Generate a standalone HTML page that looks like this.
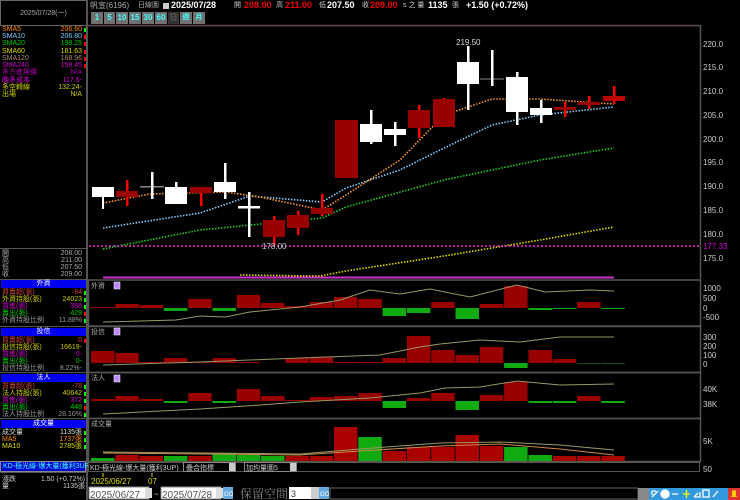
<!DOCTYPE html>
<html><head><meta charset="utf-8">
<style>
*{margin:0;padding:0;box-sizing:border-box}
body{width:740px;height:500px;background:#000;overflow:hidden;position:relative;font-family:"Liberation Sans","Noto Sans CJK TC",sans-serif;font-size:7px;color:#ccc}
.a{position:absolute;white-space:nowrap;line-height:8px}
.r{position:absolute;left:2px;width:84px;height:8px;line-height:8px;font-size:7px}
.r span{position:absolute;right:4px}
.r i{position:absolute;right:0;top:2px;width:2px;height:4px}
.hd{position:absolute;left:1px;width:85px;height:8px;background:#0000ee;color:#fff;text-align:center;font-size:7px;line-height:8px}
.btn{position:absolute;top:12px;height:12px;background:#707070;color:#4ff;font-size:8px;line-height:12px;text-align:center;font-weight:bold}
</style></head><body>
<div class="a" style="left:0;top:0;width:88px;height:26px;border:1px solid #666;border-right:2px solid #666;color:#aaa;text-align:center;line-height:25px;font-size:7px">2025/07/28(一)</div>
<div class="a" style="left:86px;top:0;width:2px;height:500px;background:#555"></div>
<div class="r" style="top:26px;color:#f80">SMA5<span>206.60</span><i style="background:#0f0"></i></div>
<div class="r" style="top:33px;color:#7cf">SMA10<span>206.80</span><i style="background:#f00"></i></div>
<div class="r" style="top:40px;color:#0c0">SMA20<span>198.25</span><i style="background:#f00"></i></div>
<div class="r" style="top:48px;color:#dd0">SMA60<span>181.63</span><i style="background:#f00"></i></div>
<div class="r" style="top:55px;color:#a87">SMA120<span>168.96</span><i style="background:#f00"></i></div>
<div class="r" style="top:62px;color:#c0c">SMA240<span>159.45</span><i style="background:#f00"></i></div>
<div class="r" style="top:69px;color:#a0a">多方進場價<span>N/A</span></div>
<div class="r" style="top:77px;color:#d0d">晚多成本<span>117.5-</span></div>
<div class="r" style="top:84px;color:#cc0">多空轉線<span>132.24-</span></div>
<div class="r" style="top:91px;color:#cc0">出場<span>N/A</span></div>
<div class="a" style="left:0;top:248px;width:86px;height:1px;background:#555"></div>
<div class="r" style="top:250px;color:#aaa">開<span>208.00</span></div>
<div class="r" style="top:257px;color:#aaa">高<span>211.00</span></div>
<div class="r" style="top:264px;color:#aaa">低<span>207.50</span></div>
<div class="r" style="top:271px;color:#aaa">收<span>209.00</span></div>
<div class="a" style="left:0;top:279px;width:86px;height:1px;background:#555"></div>
<div class="hd" style="top:280px">外資</div>
<div class="r" style="top:289px;color:#c44">買賣超(張)<span>-84</span><i style="background:#0f0"></i></div>
<div class="r" style="top:296px;color:#cc0">外資持股(張)<span>24023</span><i style="background:#0f0"></i></div>
<div class="r" style="top:303px;color:#c0c">買進(張)<span>358</span><i style="background:#0f0"></i></div>
<div class="r" style="top:310px;color:#0c0">賣出(張)<span>429</span><i style="background:#f00"></i></div>
<div class="r" style="top:317px;color:#999">外資持股比例<span>11.88%</span><i style="background:#0f0"></i></div>
<div class="a" style="left:0;top:326px;width:86px;height:1px;background:#555"></div>
<div class="hd" style="top:328px">投信</div>
<div class="r" style="top:337px;color:#c44">買賣超(張)<span>0</span><i style="background:#f00"></i></div>
<div class="r" style="top:344px;color:#cc0">投信持股(張)<span>16619-</span></div>
<div class="r" style="top:351px;color:#c0c">買進(張)<span>0-</span></div>
<div class="r" style="top:358px;color:#0c0">賣出(張)<span>0-</span></div>
<div class="r" style="top:365px;color:#999">投信持股比例<span>8.22%-</span></div>
<div class="a" style="left:0;top:372px;width:86px;height:1px;background:#555"></div>
<div class="hd" style="top:374px">法人</div>
<div class="r" style="top:383px;color:#c44">買賣超(張)<span>-78</span><i style="background:#0f0"></i></div>
<div class="r" style="top:390px;color:#cc0">法人持股(張)<span>40642</span><i style="background:#0f0"></i></div>
<div class="r" style="top:397px;color:#c0c">買進(張)<span>372</span><i style="background:#0f0"></i></div>
<div class="r" style="top:404px;color:#0c0">賣出(張)<span>448</span><i style="background:#f00"></i></div>
<div class="r" style="top:411px;color:#999">法人持股比例<span>28.10%</span><i style="background:#0f0"></i></div>
<div class="a" style="left:0;top:418px;width:86px;height:1px;background:#555"></div>
<div class="hd" style="top:420px">成交量</div>
<div class="r" style="top:429px;color:#ddd">成交量<span>1135張</span><i style="background:#0f0"></i></div>
<div class="r" style="top:436px;color:#f80">MA5<span>1737張</span><i style="background:#0f0"></i></div>
<div class="r" style="top:443px;color:#dd0">MA10<span>2785張</span><i style="background:#0f0"></i></div>
<div class="a" style="left:0;top:461px;width:86px;height:11px;background:#0000cc;border:1px solid #888;color:#4ff;line-height:9px;padding-left:2px">KD-極光線-爆大量(獲利3UP)</div>
<div class="a" style="left:0;top:472px;width:86px;height:1px;background:#555"></div>
<div class="r" style="top:476px;color:#ccc">漲跌<span style="right:1px">1.50 (+0.72%)</span></div>
<div class="r" style="top:483px;color:#ccc">量<span style="right:1px">1135張</span></div>

<div class="a" style="left:90px;top:2px;font-size:8px;color:#aaa">帆宣(6196)</div>
<div class="a" style="left:138px;top:2px;font-size:7px;color:#aaa">日線圖</div>
<div class="a" style="left:163px;top:3px;width:6px;height:6px;background:#ccc"></div>
<div class="a" style="left:171px;top:1px;font-size:9px;color:#fff;font-weight:bold">2025/07/28</div>
<div class="a" style="left:234px;top:2px;font-size:7px;color:#ccc">開</div>
<div class="a" style="left:244px;top:1px;font-size:9px;color:#e00;font-weight:bold">208.00</div>
<div class="a" style="left:276px;top:2px;font-size:7px;color:#ccc">高</div>
<div class="a" style="left:285px;top:1px;font-size:9px;color:#e00;font-weight:bold">211.00</div>
<div class="a" style="left:319px;top:2px;font-size:7px;color:#ccc">低</div>
<div class="a" style="left:327px;top:1px;font-size:9px;color:#fff;font-weight:bold">207.50</div>
<div class="a" style="left:362px;top:2px;font-size:7px;color:#ccc">收</div>
<div class="a" style="left:370px;top:1px;font-size:9px;color:#e00;font-weight:bold">209.00</div>
<div class="a" style="left:403px;top:2px;font-size:7px;color:#ccc">s 之 量</div>
<div class="a" style="left:428px;top:1px;font-size:9px;color:#fff;font-weight:bold">1135</div>
<div class="a" style="left:452px;top:2px;font-size:7px;color:#ccc">張</div>
<div class="a" style="left:466px;top:1px;font-size:9px;color:#fff;font-weight:bold">+1.50 (+0.72%)</div>
<div class="btn" style="left:91px;width:12px">1</div>
<div class="btn" style="left:104px;width:11px">5</div>
<div class="btn" style="left:116px;width:12px">10</div>
<div class="btn" style="left:129px;width:12px">15</div>
<div class="btn" style="left:142px;width:12px">30</div>
<div class="btn" style="left:155px;width:12px">60</div>
<div class="btn" style="left:168px;width:11px;background:#333;color:#555">日</div>
<div class="btn" style="left:180px;width:12px;font-size:7px">週</div>
<div class="btn" style="left:193px;width:12px;font-size:7px">月</div>

<svg class="a" style="left:0;top:0" width="740" height="500" viewBox="0 0 740 500">
<g fill="none" stroke="#555" stroke-width="1.5">
<path d="M88 25.5H700.5V279"/>
<rect x="88.5" y="280" width="612" height="46"/>
<rect x="88.5" y="326.5" width="612" height="46"/>
<rect x="88.5" y="372.5" width="612" height="46"/>
<rect x="88.5" y="418.5" width="612" height="43"/>
</g>
<line x1="88" y1="26" x2="700" y2="26" stroke="#534" stroke-width="1"/>
<g fill="#ccc" font-size="8" font-family="Liberation Sans">
<text x="703" y="47">220.0</text><text x="703" y="70">215.0</text><text x="703" y="94">210.0</text><text x="703" y="118">205.0</text><text x="703" y="142">200.0</text><text x="703" y="165">195.0</text><text x="703" y="189">190.0</text><text x="703" y="213">185.0</text><text x="703" y="237">180.0</text><text x="703" y="261">175.0</text>
<text x="703" y="291">1000</text><text x="703" y="301">500</text><text x="703" y="311">0</text><text x="703" y="320">-500</text>
<text x="703" y="340">300</text><text x="703" y="349">200</text><text x="703" y="358">100</text><text x="703" y="367">0</text>
<text x="703" y="392">40K</text><text x="703" y="407">38K</text>
<text x="703" y="444">5K</text><text x="703" y="472">50</text>
</g>
<text x="703" y="249" fill="#d0d" font-size="8">177.33</text>
<g fill="none" stroke-width="1.6" stroke-dasharray="1.5,1.5">
<polyline stroke="#dd0" points="240,275 320,276 346,271 444,256 540,240 614,227"/>
<polyline stroke="#2c2" points="103,249 200,230 322,218 346,207 444,180 540,160 614,148"/>
<polyline stroke="#8cf" points="103,228 200,213 250,196 322,202 346,188 400,170 440,150 492,125 540,115 614,107"/>
<polyline stroke="#f93" points="103,203 150,194 225,192 260,197 322,210 346,195 400,160 444,115 492,99 540,99 614,104"/>
</g>
<line x1="89" y1="246" x2="700" y2="246" stroke="#e3c" stroke-width="1.5" stroke-dasharray="2,2"/>
<line x1="103" y1="277.5" x2="614" y2="277.5" stroke="#c3c" stroke-width="2"/>
<g>
<rect x="102" y="187" width="2" height="22" fill="#fff"/><rect x="92" y="187" width="22" height="10" fill="#fff"/>
<rect x="126" y="180" width="2.5" height="26" fill="#f00"/><rect x="116" y="191" width="22" height="6" fill="#900"/>
<rect x="140" y="186" width="24" height="1.5" fill="#888"/><rect x="151" y="172" width="2.5" height="27" fill="#fff"/>
<rect x="175" y="182" width="2.5" height="22" fill="#fff"/><rect x="165" y="187" width="22" height="17" fill="#fff"/>
<rect x="200" y="187" width="2.5" height="19" fill="#f00"/><rect x="190" y="187" width="22" height="6" fill="#900"/>
<rect x="224" y="163" width="2.5" height="36" fill="#fff"/><rect x="214" y="182" width="22" height="10" fill="#fff"/>
<rect x="248" y="192" width="2.5" height="45" fill="#fff"/><rect x="238" y="206" width="22" height="2.5" fill="#fff"/>
<rect x="273" y="216" width="2.5" height="29" fill="#f00"/><rect x="263" y="220" width="22" height="17" fill="#900"/>
<rect x="297" y="211" width="2.5" height="24" fill="#f00"/><rect x="287" y="215" width="22" height="13" fill="#900"/>
<rect x="321" y="194" width="2.5" height="22" fill="#f00"/><rect x="311" y="208" width="22" height="6" fill="#900"/>
<rect x="335" y="120" width="23" height="58" fill="#900"/>
<rect x="370" y="110" width="2.5" height="34" fill="#fff"/><rect x="360" y="124" width="22" height="18" fill="#fff"/>
<rect x="394" y="122" width="2.5" height="24" fill="#fff"/><rect x="384" y="129" width="22" height="6" fill="#fff"/>
<rect x="418" y="105" width="2.5" height="33" fill="#f00"/><rect x="408" y="110" width="22" height="18" fill="#900"/>
<rect x="443" y="98" width="2.5" height="29" fill="#f00"/><rect x="433" y="99" width="22" height="28" fill="#900"/>
<rect x="467" y="46" width="2.5" height="64" fill="#fff"/><rect x="457" y="62" width="22" height="22" fill="#fff"/>
<rect x="480" y="78.5" width="24" height="1" fill="#888"/><rect x="491" y="50" width="2.5" height="36" fill="#fff"/>
<rect x="516" y="72" width="2.5" height="53" fill="#fff"/><rect x="506" y="77" width="22" height="35" fill="#fff"/>
<rect x="540" y="100" width="2.5" height="23" fill="#fff"/><rect x="530" y="108" width="22" height="7" fill="#fff"/>
<rect x="564" y="102" width="2.5" height="15" fill="#f00"/><rect x="554" y="107" width="22" height="3" fill="#900"/>
<rect x="588" y="96" width="2.5" height="13" fill="#f00"/><rect x="578" y="102" width="22" height="3" fill="#900"/>
<rect x="613" y="86" width="2.5" height="18" fill="#f00"/><rect x="603" y="96" width="22" height="5" fill="#b00"/>
</g>
<text x="456" y="45" fill="#ddd" font-size="8">219.50</text>
<text x="262" y="249" fill="#ccc" font-size="8">178.00</text>
<g fill="#aaa" font-size="7">
<text x="91" y="288">外資</text><text x="91" y="334">投信</text><text x="91" y="380">法人</text><text x="91" y="426">成交量</text>
</g>
<g fill="#b8f" stroke="#fff" stroke-width="0.5"><rect x="114" y="282" width="6" height="7"/><rect x="114" y="328" width="6" height="7"/><rect x="114" y="375" width="6" height="7"/></g>
<g>
<rect x="91" y="307" width="23.5" height="1" fill="#900"/>
<rect x="115.3" y="304" width="23.5" height="4" fill="#900"/>
<rect x="139.6" y="305" width="23.5" height="3" fill="#900"/>
<rect x="163.9" y="308" width="23.5" height="3" fill="#1a1"/>
<rect x="188.2" y="299" width="23.5" height="9" fill="#900"/>
<rect x="212.5" y="308" width="23.5" height="3" fill="#1a1"/>
<rect x="236.8" y="295" width="23.5" height="13" fill="#900"/>
<rect x="261.1" y="303" width="23.5" height="5" fill="#900"/>
<rect x="285.4" y="306" width="23.5" height="2" fill="#900"/>
<rect x="309.7" y="302" width="23.5" height="6" fill="#900"/>
<rect x="334" y="297" width="23.5" height="11" fill="#900"/>
<rect x="358.3" y="299" width="23.5" height="9" fill="#900"/>
<rect x="382.6" y="308" width="23.5" height="8" fill="#1a1"/>
<rect x="406.9" y="308" width="23.5" height="5" fill="#1a1"/>
<rect x="431.2" y="302" width="23.5" height="6" fill="#900"/>
<rect x="455.5" y="308" width="23.5" height="11" fill="#1a1"/>
<rect x="479.8" y="304" width="23.5" height="4" fill="#900"/>
<rect x="504.1" y="286" width="23.5" height="22" fill="#900"/>
<rect x="528.4" y="308" width="23.5" height="2" fill="#1a1"/>
<rect x="552.7" y="308" width="23.5" height="1" fill="#1a1"/>
<rect x="577" y="302" width="23.5" height="6" fill="#900"/>
<rect x="601.3" y="308" width="23.5" height="1" fill="#1a1"/>
</g>
<g>
<rect x="91" y="351" width="23.5" height="12" fill="#900"/>
<rect x="115.3" y="353" width="23.5" height="10" fill="#900"/>
<rect x="139.6" y="362" width="23.5" height="1" fill="#900"/>
<rect x="163.9" y="358" width="23.5" height="5" fill="#900"/>
<rect x="188.2" y="362" width="23.5" height="1" fill="#900"/>
<rect x="212.5" y="358" width="23.5" height="5" fill="#900"/>
<rect x="236.8" y="362" width="23.5" height="1" fill="#900"/>
<rect x="285.4" y="358" width="23.5" height="5" fill="#900"/>
<rect x="309.7" y="357" width="23.5" height="6" fill="#900"/>
<rect x="334" y="362" width="23.5" height="1" fill="#900"/>
<rect x="358.3" y="362" width="23.5" height="1" fill="#900"/>
<rect x="382.6" y="358" width="23.5" height="5" fill="#900"/>
<rect x="406.9" y="336" width="23.5" height="27" fill="#900"/>
<rect x="431.2" y="350" width="23.5" height="13" fill="#900"/>
<rect x="455.5" y="355" width="23.5" height="8" fill="#900"/>
<rect x="479.8" y="347" width="23.5" height="16" fill="#900"/>
<rect x="504.1" y="363" width="23.5" height="5" fill="#1a1"/>
<rect x="528.4" y="350" width="23.5" height="13" fill="#900"/>
<rect x="552.7" y="359" width="23.5" height="4" fill="#900"/>
<rect x="577" y="363" width="23.5" height="1" fill="#151"/>
<rect x="601.3" y="363" width="23.5" height="1" fill="#151"/>
</g>
<g>
<rect x="91" y="399" width="23.5" height="2" fill="#900"/>
<rect x="115.3" y="396" width="23.5" height="5" fill="#900"/>
<rect x="139.6" y="399" width="23.5" height="2" fill="#900"/>
<rect x="163.9" y="401" width="23.5" height="2" fill="#1a1"/>
<rect x="188.2" y="393" width="23.5" height="8" fill="#900"/>
<rect x="212.5" y="401" width="23.5" height="2" fill="#1a1"/>
<rect x="236.8" y="389" width="23.5" height="12" fill="#900"/>
<rect x="261.1" y="396" width="23.5" height="5" fill="#900"/>
<rect x="285.4" y="400" width="23.5" height="1" fill="#900"/>
<rect x="309.7" y="397" width="23.5" height="4" fill="#900"/>
<rect x="334" y="396" width="23.5" height="5" fill="#900"/>
<rect x="358.3" y="393" width="23.5" height="8" fill="#900"/>
<rect x="382.6" y="401" width="23.5" height="7" fill="#1a1"/>
<rect x="406.9" y="398" width="23.5" height="3" fill="#900"/>
<rect x="431.2" y="393" width="23.5" height="8" fill="#900"/>
<rect x="455.5" y="401" width="23.5" height="9" fill="#1a1"/>
<rect x="479.8" y="395" width="23.5" height="6" fill="#900"/>
<rect x="504.1" y="382" width="23.5" height="19" fill="#900"/>
<rect x="528.4" y="401" width="23.5" height="2" fill="#1a1"/>
<rect x="552.7" y="401" width="23.5" height="2" fill="#1a1"/>
<rect x="577" y="396" width="23.5" height="5" fill="#900"/>
<rect x="601.3" y="401" width="23.5" height="2" fill="#1a1"/>
</g>
<g>
<rect x="91" y="458" width="23.5" height="3" fill="#1a1"/>
<rect x="115.3" y="455" width="23.5" height="6" fill="#a00"/>
<rect x="139.6" y="456" width="23.5" height="5" fill="#a00"/>
<rect x="163.9" y="456" width="23.5" height="5" fill="#1a1"/>
<rect x="188.2" y="456" width="23.5" height="5" fill="#a00"/>
<rect x="212.5" y="453" width="23.5" height="8" fill="#1a1"/>
<rect x="236.8" y="455" width="23.5" height="6" fill="#1a1"/>
<rect x="261.1" y="456" width="23.5" height="5" fill="#1a1"/>
<rect x="285.4" y="456" width="23.5" height="5" fill="#a00"/>
<rect x="309.7" y="456" width="23.5" height="5" fill="#a00"/>
<rect x="334" y="427" width="23.5" height="34" fill="#a00"/>
<rect x="358.3" y="437" width="23.5" height="24" fill="#1a1"/>
<rect x="382.6" y="451" width="23.5" height="10" fill="#a00"/>
<rect x="406.9" y="447" width="23.5" height="14" fill="#a00"/>
<rect x="431.2" y="447" width="23.5" height="14" fill="#a00"/>
<rect x="455.5" y="435" width="23.5" height="26" fill="#a00"/>
<rect x="479.8" y="446" width="23.5" height="15" fill="#a00"/>
<rect x="504.1" y="447" width="23.5" height="14" fill="#1a1"/>
<rect x="528.4" y="455" width="23.5" height="6" fill="#1a1"/>
<rect x="552.7" y="456" width="23.5" height="5" fill="#a00"/>
<rect x="577" y="456" width="23.5" height="5" fill="#a00"/>
<rect x="601.3" y="456" width="23.5" height="5" fill="#a00"/>
</g>
<g fill="none" stroke-width="1">
<polyline stroke="#996" points="103,322 176,320 200,316 225,317 250,312 300,307 340,300 370,290 400,294 430,289 470,297 517,285 545,292 590,290 614,291"/>
<polyline stroke="#996" points="103,365 200,362 300,358 380,355 420,347 440,344 480,340 520,342 560,337 614,337"/>
<polyline stroke="#996" points="103,414 200,409 260,405 300,402 370,398 420,393 445,388 480,387 517,381 560,385 614,384"/>
<polyline stroke="#c84" points="103,453 300,455 360,451 440,446 500,444 560,449 614,455"/>
<polyline stroke="#996" points="103,452 300,454 360,449 440,443 500,442 560,445 614,450"/>
</g>
<g font-size="7" fill="#ccc">
<rect x="88.5" y="462.5" width="611" height="9" fill="#000" stroke="#555"/>
<text x="90" y="470">KD-極光線-爆大量(獲利3UP)</text>
<rect x="183.5" y="462.5" width="52" height="9" fill="#000" stroke="#888"/><text x="186" y="470">疊合指標</text>
<rect x="229" y="463" width="6" height="8" fill="#ccc"/>
<rect x="244.5" y="462.5" width="52" height="9" fill="#000" stroke="#888"/><text x="246" y="470">加均量圖5</text>
<rect x="290" y="463" width="6" height="8" fill="#ccc"/>
</g>
<g>
<text x="91" y="484" fill="#dd0" font-size="8">2025/06/27</text>
<text x="148" y="484" fill="#dd0" font-size="8">07</text>
<line x1="103" y1="473" x2="103" y2="477" stroke="#dd0"/><line x1="152" y1="473" x2="152" y2="477" stroke="#dd0"/>
<rect x="89" y="487" width="60" height="12" fill="#fff" stroke="#888"/><text x="90" y="498" fill="#555" font-size="10">2025/06/27</text><rect x="145" y="488" width="7" height="10" fill="#ddd"/>
<text x="154" y="497" fill="#ccc" font-size="8">~</text>
<rect x="161" y="487" width="60" height="12" fill="#fff" stroke="#888"/><text x="162" y="498" fill="#555" font-size="10">2025/07/28</text><rect x="216" y="488" width="7" height="10" fill="#ddd"/>
<rect x="223" y="487" width="10" height="12" fill="#6ad"/><text x="224" y="496" fill="#fff" font-size="6">GO</text>
<text x="240" y="498" fill="#888" font-size="12" font-family="Noto Serif CJK SC,serif">保留空間</text>
<rect x="289" y="487" width="22" height="12" fill="#fff"/><text x="291" y="497" fill="#333" font-size="9">3</text>
<rect x="311" y="487" width="8" height="12" fill="#ccc"/>
<rect x="319" y="487" width="10" height="12" fill="#6ad"/><text x="320" y="496" fill="#fff" font-size="6">GO</text>
<rect x="330" y="488" width="308" height="11" fill="#000" stroke="#666"/>
<rect x="638" y="488" width="11" height="12" fill="#888"/>
<rect x="649" y="488" width="80" height="12" fill="#39d"/>
<g stroke="#fff" stroke-width="1.3" fill="none">
<path d="M652 497l6-6M652 491h4M652 491v4"/><circle cx="665" cy="494" r="4" fill="#fff"/>
<path d="M672 494h6"/><path d="M683 494h7M686.5 490v8" stroke="#ff0"/>
<path d="M694 497h6v-5M694 497l4-4"/><rect x="703" y="490" width="6" height="7"/><path d="M713 497l5-6"/>
</g>
<rect x="728" y="488" width="12" height="12" fill="#d33"/><path d="M731 497h6l-1-2v-3a2 2 0 0 0-4 0v3z" fill="#fc0"/>
</g>
</svg>
</body></html>
